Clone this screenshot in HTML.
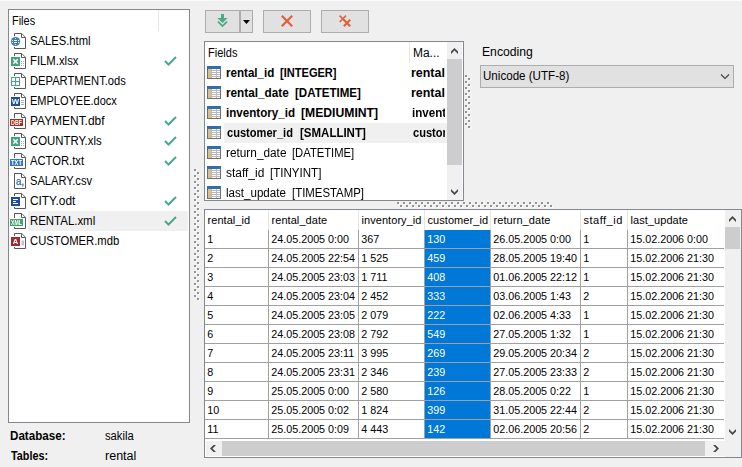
<!DOCTYPE html>
<html><head><meta charset="utf-8"><title>Import</title>
<style>
html,body{margin:0;padding:0}
body{width:742px;height:467px;background:#f0f0f0;position:relative;overflow:hidden;font-family:"Liberation Sans",sans-serif;font-size:12px;color:#000}
div,span{box-sizing:border-box}
.abs{position:absolute}
.t{position:absolute;white-space:nowrap;line-height:16px;height:16px;transform-origin:0 0}
.box{position:absolute;background:#fff;border:1px solid #828790}
.ic,.ck,.fi{position:absolute;display:block;overflow:visible}.ic{will-change:transform}
.btn{position:absolute;background:#e1e1e1;border:1px solid #adadad}
.g{position:absolute;white-space:nowrap;font-size:10.75px;line-height:14px;height:14px}
.gh{font-size:11px;letter-spacing:0.06px}
.b{font-weight:bold}
.dd,.dw{position:absolute;width:2px;height:2px;display:block}.dd{background:#939393}.dw{background:#fbfbfb}
.clip{position:absolute;overflow:hidden;height:16px}
</style></head>
<body>
<div class="abs" style="left:0;top:0;width:742px;height:1px;background:#fafafa"></div>
<div class="box" style="left:8px;top:9px;width:182px;height:414px"></div>
<div class="abs" style="left:158px;top:10px;width:1px;height:21px;background:#e5e5e5"></div>
<span class="t" style="left:11.99px;top:13px;transform:scaleX(0.9125);">Files</span>
<svg class="ic" style="left:10px;top:33px" width="17" height="16" viewBox="0 0 17 16"><path d="M4.500 0.500h7l4 4v11h-11z" fill="#fff"/><path d="M11.500 0.500H4.500V15.500H15.500V4.500H11.500V0.500" fill="none" stroke="#585858"/><path d="M11.600 0.400L15.600 4.400" fill="none" stroke="#5c5c5c" stroke-width="0.900"/><circle cx="5.5" cy="8.5" r="5.6" fill="#fff"/><circle cx="5.5" cy="8.5" r="4.6" fill="#4179bd"/><path d="M4 7.500h3M4 9.500h3" stroke="#fff" stroke-width="1"/><path d="M5 5.500h1M5 11.500h1M2 7.500h1M8 7.500h1M2 9.500h1M8 9.500h1" stroke="#dbe7f6" stroke-width="1"/></svg>
<span class="t" style="left:29.76px;top:33px;transform:scaleX(0.9365);">SALES.html</span>
<svg class="ic" style="left:10px;top:53px" width="17" height="16" viewBox="0 0 17 16"><path d="M4.500 0.500h7l4 4v11h-11z" fill="#fff"/><path d="M11.500 0.500H4.500V15.500H15.500V4.500H11.500V0.500" fill="none" stroke="#585858"/><path d="M11.600 0.400L15.600 4.400" fill="none" stroke="#5c5c5c" stroke-width="0.900"/><rect x="0" y="3" width="11" height="11" fill="#fff"/><rect x="1" y="4" width="9" height="9" fill="#41a37a"/><path d="M3.300 6.200l4.400 4.600M7.700 6.200l-4.400 4.600" stroke="#fff" stroke-width="1.500" fill="none"/><path d="M11 8.500h1M13 8.500h1M11 10.500h1M13 10.500h1M11 12.500h1M13 12.500h1" stroke="#b4b4b4" stroke-width="1"/></svg>
<span class="t" style="left:29.96px;top:53px;transform:scaleX(0.9440);">FILM.xlsx</span>
<svg class="ck" style="left:160px;top:51px" width="20" height="20" viewBox="0 0 20 20"><path d="M5 10l3.500 3.500L16 6" fill="none" stroke="#4aaa85" stroke-width="2"/></svg>
<svg class="ic" style="left:10px;top:73px" width="17" height="16" viewBox="0 0 17 16"><path d="M4.500 0.500h7l4 4v11h-11z" fill="#fff"/><path d="M11.500 0.500H4.500V15.500H15.500V4.500H11.500V0.500" fill="none" stroke="#585858"/><path d="M11.600 0.400L15.600 4.400" fill="none" stroke="#5c5c5c" stroke-width="0.900"/><rect x="0" y="3" width="11" height="11" fill="#fff"/><rect x="1.500" y="4.500" width="8" height="8" fill="#fff" stroke="#48a880"/><path d="M5.500 4.500v8M1.500 8.500h8" stroke="#48a880" fill="none"/></svg>
<span class="t" style="left:29.97px;top:73px;transform:scaleX(0.9314);">DEPARTMENT.ods</span>
<svg class="ic" style="left:10px;top:93px" width="17" height="16" viewBox="0 0 17 16"><path d="M4.500 0.500h7l4 4v11h-11z" fill="#fff"/><path d="M11.500 0.500H4.500V15.500H15.500V4.500H11.500V0.500" fill="none" stroke="#585858"/><path d="M11.600 0.400L15.600 4.400" fill="none" stroke="#5c5c5c" stroke-width="0.900"/><rect x="0" y="3" width="11" height="11" fill="#fff"/><rect x="1" y="4" width="9" height="9" fill="#1e4e9c"/><text x="5.500" y="11.300" font-size="8" font-weight="bold" text-anchor="middle" fill="#fff" font-family="Liberation Sans, sans-serif" textLength="7.400" lengthAdjust="spacingAndGlyphs">W</text><path d="M11 7.500h3M11 9.500h3M11 11.500h3" stroke="#b4b4b4" stroke-width="1"/></svg>
<span class="t" style="left:29.98px;top:93px;transform:scaleX(0.9172);">EMPLOYEE.docx</span>
<svg class="ic" style="left:10px;top:113px" width="17" height="16" viewBox="0 0 17 16"><path d="M4.500 0.500h7l4 4v11h-11z" fill="#fff"/><path d="M11.500 0.500H4.500V15.500H15.500V4.500H11.500V0.500" fill="none" stroke="#585858"/><path d="M11.600 0.400L15.600 4.400" fill="none" stroke="#5c5c5c" stroke-width="0.900"/><rect x="-1" y="5" width="15" height="9" fill="#fff"/><rect x="0" y="6" width="13" height="7" fill="#b02a18"/><text x="1.100" y="12" font-size="6.700" font-weight="bold" fill="#fff" font-family="Liberation Sans, sans-serif" textLength="10.800" lengthAdjust="spacingAndGlyphs">DBF</text></svg>
<span class="t" style="left:29.91px;top:113px;transform:scaleX(0.9946);">PAYMENT.dbf</span>
<svg class="ck" style="left:160px;top:111px" width="20" height="20" viewBox="0 0 20 20"><path d="M5 10l3.500 3.500L16 6" fill="none" stroke="#4aaa85" stroke-width="2"/></svg>
<svg class="ic" style="left:10px;top:133px" width="17" height="16" viewBox="0 0 17 16"><path d="M4.500 0.500h7l4 4v11h-11z" fill="#fff"/><path d="M11.500 0.500H4.500V15.500H15.500V4.500H11.500V0.500" fill="none" stroke="#585858"/><path d="M11.600 0.400L15.600 4.400" fill="none" stroke="#5c5c5c" stroke-width="0.900"/><rect x="0" y="3" width="11" height="11" fill="#fff"/><rect x="1" y="4" width="9" height="9" fill="#41a37a"/><path d="M3.300 6.200l4.400 4.600M7.700 6.200l-4.400 4.600" stroke="#fff" stroke-width="1.500" fill="none"/><path d="M11 8.500h1M13 8.500h1M11 10.500h1M13 10.500h1M11 12.500h1M13 12.500h1" stroke="#b4b4b4" stroke-width="1"/></svg>
<span class="t" style="left:29.75px;top:133px;transform:scaleX(0.9473);">COUNTRY.xls</span>
<svg class="ck" style="left:160px;top:131px" width="20" height="20" viewBox="0 0 20 20"><path d="M5 10l3.500 3.500L16 6" fill="none" stroke="#4aaa85" stroke-width="2"/></svg>
<svg class="ic" style="left:10px;top:153px" width="17" height="16" viewBox="0 0 17 16"><path d="M4.500 0.500h7l4 4v11h-11z" fill="#fff"/><path d="M11.500 0.500H4.500V15.500H15.500V4.500H11.500V0.500" fill="none" stroke="#585858"/><path d="M11.600 0.400L15.600 4.400" fill="none" stroke="#5c5c5c" stroke-width="0.900"/><rect x="-1" y="5" width="15" height="9" fill="#fff"/><rect x="0" y="6" width="13" height="7" fill="#3878c0"/><text x="1.100" y="12" font-size="6.700" font-weight="bold" fill="#fff" font-family="Liberation Sans, sans-serif" textLength="10.800" lengthAdjust="spacingAndGlyphs">TXT</text></svg>
<span class="t" style="left:30.20px;top:153px;transform:scaleX(0.9345);">ACTOR.txt</span>
<svg class="ck" style="left:160px;top:151px" width="20" height="20" viewBox="0 0 20 20"><path d="M5 10l3.500 3.500L16 6" fill="none" stroke="#4aaa85" stroke-width="2"/></svg>
<svg class="ic" style="left:10px;top:173px" width="17" height="16" viewBox="0 0 17 16"><path d="M4.500 0.500h7l4 4v11h-11z" fill="#fff"/><path d="M11.500 0.500H4.500V15.500H15.500V4.500H11.500V0.500" fill="none" stroke="#585858"/><path d="M11.600 0.400L15.600 4.400" fill="none" stroke="#5c5c5c" stroke-width="0.900"/><text x="6.1" y="12.2" font-size="11" fill="#2a68bb" stroke="#2a68bb" stroke-width="0.250" font-family="Liberation Sans, sans-serif" textLength="8.2" lengthAdjust="spacingAndGlyphs">a,</text></svg>
<span class="t" style="left:29.77px;top:173px;transform:scaleX(0.9273);">SALARY.csv</span>
<svg class="ic" style="left:10px;top:193px" width="17" height="16" viewBox="0 0 17 16"><path d="M4.500 0.500h7l4 4v11h-11z" fill="#fff"/><path d="M11.500 0.500H4.500V15.500H15.500V4.500H11.500V0.500" fill="none" stroke="#585858"/><path d="M11.600 0.400L15.600 4.400" fill="none" stroke="#5c5c5c" stroke-width="0.900"/><rect x="0" y="3" width="11" height="11" fill="#fff"/><rect x="1" y="4" width="9" height="9" fill="#1c4c9a"/><path d="M3 6.500h5M3 8.500h3M3 10.500h5" stroke="#fff" stroke-width="1"/></svg>
<span class="t" style="left:29.71px;top:193px;transform:scaleX(0.9889);">CITY.odt</span>
<svg class="ck" style="left:160px;top:191px" width="20" height="20" viewBox="0 0 20 20"><path d="M5 10l3.500 3.500L16 6" fill="none" stroke="#4aaa85" stroke-width="2"/></svg>
<div class="abs" style="left:28px;top:211px;width:160px;height:20px;background:#f0f0f0"></div>
<svg class="ic" style="left:10px;top:213px" width="17" height="16" viewBox="0 0 17 16"><path d="M4.500 0.500h7l4 4v11h-11z" fill="#fff"/><path d="M11.500 0.500H4.500V15.500H15.500V4.500H11.500V0.500" fill="none" stroke="#585858"/><path d="M11.600 0.400L15.600 4.400" fill="none" stroke="#5c5c5c" stroke-width="0.900"/><rect x="-1" y="5" width="15" height="9" fill="#fff"/><rect x="0" y="6" width="13" height="7" fill="#3fa374"/><text x="1.100" y="12" font-size="6.700" font-weight="bold" fill="#fff" font-family="Liberation Sans, sans-serif" textLength="10.800" lengthAdjust="spacingAndGlyphs">XML</text></svg>
<span class="t" style="left:29.95px;top:213px;transform:scaleX(0.9522);">RENTAL.xml</span>
<svg class="ck" style="left:160px;top:211px" width="20" height="20" viewBox="0 0 20 20"><path d="M5 10l3.500 3.500L16 6" fill="none" stroke="#4aaa85" stroke-width="2"/></svg>
<svg class="ic" style="left:10px;top:233px" width="17" height="16" viewBox="0 0 17 16"><path d="M4.500 0.500h7l4 4v11h-11z" fill="#fff"/><path d="M11.500 0.500H4.500V15.500H15.500V4.500H11.500V0.500" fill="none" stroke="#585858"/><path d="M11.600 0.400L15.600 4.400" fill="none" stroke="#5c5c5c" stroke-width="0.900"/><rect x="0" y="3" width="11" height="11" fill="#fff"/><rect x="1" y="4" width="9" height="9" fill="#a22a32"/><text x="5.500" y="11.300" font-size="7.500" font-weight="bold" text-anchor="middle" fill="#fff" font-family="Liberation Sans, sans-serif">A</text><path d="M11.500 7.500h2.500v5h-2.500z" fill="#c4c4c4"/></svg>
<span class="t" style="left:29.76px;top:233px;transform:scaleX(0.9383);">CUSTOMER.mdb</span>
<span class="t b" style="left:9.93px;top:428px;transform:scaleX(0.9691);">Database:</span>
<span class="t" style="left:104.57px;top:428px;transform:scaleX(0.9333);">sakila</span>
<span class="t b" style="left:10.90px;top:448px;transform:scaleX(0.9000);">Tables:</span>
<span class="t" style="left:104.66px;top:448px;transform:scaleX(1.0429);">rental</span>
<div class="btn" style="left:205px;top:10px;width:35px;height:23px"></div>
<div class="btn" style="left:240px;top:10px;width:13px;height:23px"></div>
<svg class="abs" style="left:214px;top:13px" width="17" height="16" viewBox="0 0 17 16"><path d="M7 1h3v4h3.600l-5.100 5.100L3.400 5h3.600z" fill="#4caa84"/><path d="M4 8.600l4.500 4.500L13 8.600" fill="none" stroke="#4caa84" stroke-width="1.800"/></svg>
<svg class="abs" style="left:243px;top:20px" width="7" height="4" viewBox="0 0 7 4"><path d="M0 0h7l-3.500 4z" fill="#000"/></svg>
<div class="btn" style="left:263px;top:10px;width:48px;height:23px"></div>
<svg class="abs" style="left:280px;top:14px" width="14" height="14" viewBox="0 0 14 14"><path d="M1.800 1.800l10.400 10.400M12.200 1.800l-10.400 10.400" stroke="#e0603c" stroke-width="2.200" fill="none"/></svg>
<div class="btn" style="left:321px;top:10px;width:48px;height:23px"></div>
<svg class="abs" style="left:338px;top:14px" width="14" height="14" viewBox="0 0 14 14"><path d="M1.600 1.600l6 6M8 1.600l-6.400 6.400" stroke="#e0603c" stroke-width="1.500" fill="none"/><path d="M5.800 5.800l6.400 6.400M12.200 5.800l-6.400 6.400" stroke="#e0603c" stroke-width="2.200" fill="none"/></svg>
<div class="box" style="left:204px;top:41px;width:260px;height:160px"></div>
<span class="t" style="left:207.98px;top:45px;transform:scaleX(0.9194);">Fields</span>
<div class="abs" style="left:409px;top:42px;width:1px;height:21px;background:#e5e5e5"></div>
<span class="t" style="left:412.80px;top:45px;transform:scaleX(0.9960);">Ma...</span>
<svg class="fi" style="left:207px;top:66px" width="14" height="13" viewBox="0 0 14 13" shape-rendering="crispEdges"><rect x="0" y="0" width="14" height="3" fill="#2f6db5"/><rect x="0" y="3" width="14" height="10" fill="#6e6e6e"/><rect x="1" y="3" width="12" height="9" fill="#b9b9b9"/><rect x="1" y="3" width="3" height="1" fill="#f5c35a"/><rect x="5" y="3" width="4" height="1" fill="#fff"/><rect x="10" y="3" width="3" height="1" fill="#fff"/><rect x="1" y="5" width="3" height="1" fill="#f5c35a"/><rect x="5" y="5" width="4" height="1" fill="#fff"/><rect x="10" y="5" width="3" height="1" fill="#fff"/><rect x="1" y="7" width="3" height="1" fill="#f5c35a"/><rect x="5" y="7" width="4" height="1" fill="#fff"/><rect x="10" y="7" width="3" height="1" fill="#fff"/><rect x="1" y="9" width="3" height="1" fill="#f5c35a"/><rect x="5" y="9" width="4" height="1" fill="#fff"/><rect x="10" y="9" width="3" height="1" fill="#fff"/><rect x="1" y="11" width="3" height="1" fill="#f5c35a"/><rect x="5" y="11" width="4" height="1" fill="#fff"/><rect x="10" y="11" width="3" height="1" fill="#fff"/></svg>
<span class="t b" style="left:225.63px;top:65px;transform:scaleX(0.9667);">rental_id</span>
<span class="t b" style="left:280.18px;top:65px;transform:scaleX(0.9217);">[INTEGER]</span>
<span class="t b" style="left:411.36px;top:65px;transform:scaleX(1.0355);">rental</span>
<svg class="fi" style="left:207px;top:86px" width="14" height="13" viewBox="0 0 14 13" shape-rendering="crispEdges"><rect x="0" y="0" width="14" height="3" fill="#2f6db5"/><rect x="0" y="3" width="14" height="10" fill="#6e6e6e"/><rect x="1" y="3" width="12" height="9" fill="#b9b9b9"/><rect x="1" y="3" width="3" height="1" fill="#f5c35a"/><rect x="5" y="3" width="4" height="1" fill="#fff"/><rect x="10" y="3" width="3" height="1" fill="#fff"/><rect x="1" y="5" width="3" height="1" fill="#f5c35a"/><rect x="5" y="5" width="4" height="1" fill="#fff"/><rect x="10" y="5" width="3" height="1" fill="#fff"/><rect x="1" y="7" width="3" height="1" fill="#f5c35a"/><rect x="5" y="7" width="4" height="1" fill="#fff"/><rect x="10" y="7" width="3" height="1" fill="#fff"/><rect x="1" y="9" width="3" height="1" fill="#f5c35a"/><rect x="5" y="9" width="4" height="1" fill="#fff"/><rect x="10" y="9" width="3" height="1" fill="#fff"/><rect x="1" y="11" width="3" height="1" fill="#f5c35a"/><rect x="5" y="11" width="4" height="1" fill="#fff"/><rect x="10" y="11" width="3" height="1" fill="#fff"/></svg>
<span class="t b" style="left:225.62px;top:85px;transform:scaleX(0.9794);">rental_date</span>
<span class="t b" style="left:294.94px;top:85px;transform:scaleX(0.9627);">[DATETIME]</span>
<span class="t b" style="left:411.36px;top:85px;transform:scaleX(1.0355);">rental</span>
<svg class="fi" style="left:207px;top:106px" width="14" height="13" viewBox="0 0 14 13" shape-rendering="crispEdges"><rect x="0" y="0" width="14" height="3" fill="#2f6db5"/><rect x="0" y="3" width="14" height="10" fill="#6e6e6e"/><rect x="1" y="3" width="12" height="9" fill="#b9b9b9"/><rect x="1" y="3" width="3" height="1" fill="#f5c35a"/><rect x="5" y="3" width="4" height="1" fill="#fff"/><rect x="10" y="3" width="3" height="1" fill="#fff"/><rect x="1" y="5" width="3" height="1" fill="#f5c35a"/><rect x="5" y="5" width="4" height="1" fill="#fff"/><rect x="10" y="5" width="3" height="1" fill="#fff"/><rect x="1" y="7" width="3" height="1" fill="#f5c35a"/><rect x="5" y="7" width="4" height="1" fill="#fff"/><rect x="10" y="7" width="3" height="1" fill="#fff"/><rect x="1" y="9" width="3" height="1" fill="#f5c35a"/><rect x="5" y="9" width="4" height="1" fill="#fff"/><rect x="10" y="9" width="3" height="1" fill="#fff"/><rect x="1" y="11" width="3" height="1" fill="#f5c35a"/><rect x="5" y="11" width="4" height="1" fill="#fff"/><rect x="10" y="11" width="3" height="1" fill="#fff"/></svg>
<span class="t b" style="left:225.63px;top:105px;transform:scaleX(0.9671);">inventory_id</span>
<span class="t b" style="left:301.19px;top:105px;transform:scaleX(1.0147);">[MEDIUMINT]</span>
<div class="clip" style="left:0;top:105px;width:445px"><span class="t b" style="left:411.83px;top:0px;transform:scaleX(0.9671);">inventory_id</span></div>
<div class="abs" style="left:224px;top:123px;width:223px;height:20px;background:#f0f0f0"></div>
<svg class="fi" style="left:207px;top:126px" width="14" height="13" viewBox="0 0 14 13" shape-rendering="crispEdges"><rect x="0" y="0" width="14" height="3" fill="#2f6db5"/><rect x="0" y="3" width="14" height="10" fill="#6e6e6e"/><rect x="1" y="3" width="12" height="9" fill="#b9b9b9"/><rect x="1" y="3" width="3" height="1" fill="#f5c35a"/><rect x="5" y="3" width="4" height="1" fill="#fff"/><rect x="10" y="3" width="3" height="1" fill="#fff"/><rect x="1" y="5" width="3" height="1" fill="#f5c35a"/><rect x="5" y="5" width="4" height="1" fill="#fff"/><rect x="10" y="5" width="3" height="1" fill="#fff"/><rect x="1" y="7" width="3" height="1" fill="#f5c35a"/><rect x="5" y="7" width="4" height="1" fill="#fff"/><rect x="10" y="7" width="3" height="1" fill="#fff"/><rect x="1" y="9" width="3" height="1" fill="#f5c35a"/><rect x="5" y="9" width="4" height="1" fill="#fff"/><rect x="10" y="9" width="3" height="1" fill="#fff"/><rect x="1" y="11" width="3" height="1" fill="#f5c35a"/><rect x="5" y="11" width="4" height="1" fill="#fff"/><rect x="10" y="11" width="3" height="1" fill="#fff"/></svg>
<span class="t b" style="left:226.50px;top:125px;transform:scaleX(0.9239);">customer_id</span>
<span class="t b" style="left:299.94px;top:125px;transform:scaleX(0.9582);">[SMALLINT]</span>
<div class="clip" style="left:0;top:125px;width:445px"><span class="t b" style="left:412.80px;top:0px;transform:scaleX(0.9239);">customer_id</span></div>
<svg class="fi" style="left:207px;top:146px" width="14" height="13" viewBox="0 0 14 13" shape-rendering="crispEdges"><rect x="0" y="0" width="14" height="3" fill="#2f6db5"/><rect x="0" y="3" width="14" height="10" fill="#6e6e6e"/><rect x="1" y="3" width="12" height="9" fill="#b9b9b9"/><rect x="1" y="3" width="3" height="1" fill="#f5c35a"/><rect x="5" y="3" width="4" height="1" fill="#fff"/><rect x="10" y="3" width="3" height="1" fill="#fff"/><rect x="1" y="5" width="3" height="1" fill="#f5c35a"/><rect x="5" y="5" width="4" height="1" fill="#fff"/><rect x="10" y="5" width="3" height="1" fill="#fff"/><rect x="1" y="7" width="3" height="1" fill="#f5c35a"/><rect x="5" y="7" width="4" height="1" fill="#fff"/><rect x="10" y="7" width="3" height="1" fill="#fff"/><rect x="1" y="9" width="3" height="1" fill="#f5c35a"/><rect x="5" y="9" width="4" height="1" fill="#fff"/><rect x="10" y="9" width="3" height="1" fill="#fff"/><rect x="1" y="11" width="3" height="1" fill="#f5c35a"/><rect x="5" y="11" width="4" height="1" fill="#fff"/><rect x="10" y="11" width="3" height="1" fill="#fff"/></svg>
<span class="t" style="left:225.71px;top:145px;transform:scaleX(0.9850);">return_date</span>
<span class="t" style="left:292.06px;top:145px;transform:scaleX(0.9354);">[DATETIME]</span>
<svg class="fi" style="left:207px;top:166px" width="14" height="13" viewBox="0 0 14 13" shape-rendering="crispEdges"><rect x="0" y="0" width="14" height="3" fill="#2f6db5"/><rect x="0" y="3" width="14" height="10" fill="#6e6e6e"/><rect x="1" y="3" width="12" height="9" fill="#b9b9b9"/><rect x="1" y="3" width="3" height="1" fill="#f5c35a"/><rect x="5" y="3" width="4" height="1" fill="#fff"/><rect x="10" y="3" width="3" height="1" fill="#fff"/><rect x="1" y="5" width="3" height="1" fill="#f5c35a"/><rect x="5" y="5" width="4" height="1" fill="#fff"/><rect x="10" y="5" width="3" height="1" fill="#fff"/><rect x="1" y="7" width="3" height="1" fill="#f5c35a"/><rect x="5" y="7" width="4" height="1" fill="#fff"/><rect x="10" y="7" width="3" height="1" fill="#fff"/><rect x="1" y="9" width="3" height="1" fill="#f5c35a"/><rect x="5" y="9" width="4" height="1" fill="#fff"/><rect x="10" y="9" width="3" height="1" fill="#fff"/><rect x="1" y="11" width="3" height="1" fill="#f5c35a"/><rect x="5" y="11" width="4" height="1" fill="#fff"/><rect x="10" y="11" width="3" height="1" fill="#fff"/></svg>
<span class="t" style="left:225.51px;top:165px;transform:scaleX(0.9946);">staff_id</span>
<span class="t" style="left:269.84px;top:165px;transform:scaleX(0.9635);">[TINYINT]</span>
<svg class="fi" style="left:207px;top:186px" width="14" height="13" viewBox="0 0 14 13" shape-rendering="crispEdges"><rect x="0" y="0" width="14" height="3" fill="#2f6db5"/><rect x="0" y="3" width="14" height="10" fill="#6e6e6e"/><rect x="1" y="3" width="12" height="9" fill="#b9b9b9"/><rect x="1" y="3" width="3" height="1" fill="#f5c35a"/><rect x="5" y="3" width="4" height="1" fill="#fff"/><rect x="10" y="3" width="3" height="1" fill="#fff"/><rect x="1" y="5" width="3" height="1" fill="#f5c35a"/><rect x="5" y="5" width="4" height="1" fill="#fff"/><rect x="10" y="5" width="3" height="1" fill="#fff"/><rect x="1" y="7" width="3" height="1" fill="#f5c35a"/><rect x="5" y="7" width="4" height="1" fill="#fff"/><rect x="10" y="7" width="3" height="1" fill="#fff"/><rect x="1" y="9" width="3" height="1" fill="#f5c35a"/><rect x="5" y="9" width="4" height="1" fill="#fff"/><rect x="10" y="9" width="3" height="1" fill="#fff"/><rect x="1" y="11" width="3" height="1" fill="#f5c35a"/><rect x="5" y="11" width="4" height="1" fill="#fff"/><rect x="10" y="11" width="3" height="1" fill="#fff"/></svg>
<span class="t" style="left:225.93px;top:185px;transform:scaleX(0.9656);">last_update</span>
<span class="t" style="left:292.25px;top:185px;transform:scaleX(0.9500);">[TIMESTAMP]</span>
<div class="abs" style="left:447px;top:42px;width:15px;height:158px;background:#f0f0f0"></div>
<div class="abs" style="left:447px;top:59px;width:15px;height:106px;background:#cdcdcd"></div>
<svg class="abs" style="left:451px;top:48px" width="7" height="6" viewBox="0 0 7 6"><path d="M3.500 0L7 3.500V6L3.500 2.500L0 6V3.500z" fill="#484848"/></svg>
<svg class="abs" style="left:451px;top:189px" width="7" height="6" viewBox="0 0 7 6"><path d="M3.500 6L7 2.500V0L3.500 3.500L0 0V2.500z" fill="#484848"/></svg>
<i class="dw" style="left:466px;top:76px"></i><i class="dd" style="left:465px;top:75px"></i>
<i class="dw" style="left:469px;top:79px"></i><i class="dd" style="left:468px;top:78px"></i>
<i class="dw" style="left:466px;top:82px"></i><i class="dd" style="left:465px;top:81px"></i>
<i class="dw" style="left:469px;top:85px"></i><i class="dd" style="left:468px;top:84px"></i>
<i class="dw" style="left:466px;top:88px"></i><i class="dd" style="left:465px;top:87px"></i>
<i class="dw" style="left:469px;top:91px"></i><i class="dd" style="left:468px;top:90px"></i>
<i class="dw" style="left:466px;top:94px"></i><i class="dd" style="left:465px;top:93px"></i>
<i class="dw" style="left:469px;top:97px"></i><i class="dd" style="left:468px;top:96px"></i>
<i class="dw" style="left:466px;top:100px"></i><i class="dd" style="left:465px;top:99px"></i>
<i class="dw" style="left:469px;top:103px"></i><i class="dd" style="left:468px;top:102px"></i>
<i class="dw" style="left:466px;top:106px"></i><i class="dd" style="left:465px;top:105px"></i>
<i class="dw" style="left:469px;top:109px"></i><i class="dd" style="left:468px;top:108px"></i>
<i class="dw" style="left:466px;top:112px"></i><i class="dd" style="left:465px;top:111px"></i>
<i class="dw" style="left:469px;top:115px"></i><i class="dd" style="left:468px;top:114px"></i>
<i class="dw" style="left:466px;top:118px"></i><i class="dd" style="left:465px;top:117px"></i>
<i class="dw" style="left:469px;top:121px"></i><i class="dd" style="left:468px;top:120px"></i>
<i class="dw" style="left:466px;top:124px"></i><i class="dd" style="left:465px;top:123px"></i>
<i class="dw" style="left:469px;top:127px"></i><i class="dd" style="left:468px;top:126px"></i>
<i class="dw" style="left:195px;top:170px"></i><i class="dd" style="left:194px;top:169px"></i>
<i class="dw" style="left:198px;top:173px"></i><i class="dd" style="left:197px;top:172px"></i>
<i class="dw" style="left:195px;top:176px"></i><i class="dd" style="left:194px;top:175px"></i>
<i class="dw" style="left:198px;top:179px"></i><i class="dd" style="left:197px;top:178px"></i>
<i class="dw" style="left:195px;top:182px"></i><i class="dd" style="left:194px;top:181px"></i>
<i class="dw" style="left:198px;top:185px"></i><i class="dd" style="left:197px;top:184px"></i>
<i class="dw" style="left:195px;top:188px"></i><i class="dd" style="left:194px;top:187px"></i>
<i class="dw" style="left:198px;top:191px"></i><i class="dd" style="left:197px;top:190px"></i>
<i class="dw" style="left:195px;top:194px"></i><i class="dd" style="left:194px;top:193px"></i>
<i class="dw" style="left:198px;top:197px"></i><i class="dd" style="left:197px;top:196px"></i>
<i class="dw" style="left:195px;top:200px"></i><i class="dd" style="left:194px;top:199px"></i>
<i class="dw" style="left:198px;top:203px"></i><i class="dd" style="left:197px;top:202px"></i>
<i class="dw" style="left:195px;top:206px"></i><i class="dd" style="left:194px;top:205px"></i>
<i class="dw" style="left:198px;top:209px"></i><i class="dd" style="left:197px;top:208px"></i>
<i class="dw" style="left:195px;top:212px"></i><i class="dd" style="left:194px;top:211px"></i>
<i class="dw" style="left:198px;top:215px"></i><i class="dd" style="left:197px;top:214px"></i>
<i class="dw" style="left:195px;top:218px"></i><i class="dd" style="left:194px;top:217px"></i>
<i class="dw" style="left:198px;top:221px"></i><i class="dd" style="left:197px;top:220px"></i>
<i class="dw" style="left:195px;top:224px"></i><i class="dd" style="left:194px;top:223px"></i>
<i class="dw" style="left:198px;top:227px"></i><i class="dd" style="left:197px;top:226px"></i>
<i class="dw" style="left:195px;top:230px"></i><i class="dd" style="left:194px;top:229px"></i>
<i class="dw" style="left:198px;top:233px"></i><i class="dd" style="left:197px;top:232px"></i>
<i class="dw" style="left:195px;top:236px"></i><i class="dd" style="left:194px;top:235px"></i>
<i class="dw" style="left:198px;top:239px"></i><i class="dd" style="left:197px;top:238px"></i>
<i class="dw" style="left:195px;top:242px"></i><i class="dd" style="left:194px;top:241px"></i>
<i class="dw" style="left:198px;top:245px"></i><i class="dd" style="left:197px;top:244px"></i>
<i class="dw" style="left:195px;top:248px"></i><i class="dd" style="left:194px;top:247px"></i>
<i class="dw" style="left:198px;top:251px"></i><i class="dd" style="left:197px;top:250px"></i>
<i class="dw" style="left:195px;top:254px"></i><i class="dd" style="left:194px;top:253px"></i>
<i class="dw" style="left:198px;top:257px"></i><i class="dd" style="left:197px;top:256px"></i>
<i class="dw" style="left:195px;top:260px"></i><i class="dd" style="left:194px;top:259px"></i>
<i class="dw" style="left:198px;top:263px"></i><i class="dd" style="left:197px;top:262px"></i>
<i class="dw" style="left:195px;top:266px"></i><i class="dd" style="left:194px;top:265px"></i>
<i class="dw" style="left:198px;top:269px"></i><i class="dd" style="left:197px;top:268px"></i>
<i class="dw" style="left:195px;top:272px"></i><i class="dd" style="left:194px;top:271px"></i>
<i class="dw" style="left:198px;top:275px"></i><i class="dd" style="left:197px;top:274px"></i>
<i class="dw" style="left:195px;top:278px"></i><i class="dd" style="left:194px;top:277px"></i>
<i class="dw" style="left:198px;top:281px"></i><i class="dd" style="left:197px;top:280px"></i>
<i class="dw" style="left:195px;top:284px"></i><i class="dd" style="left:194px;top:283px"></i>
<i class="dw" style="left:198px;top:287px"></i><i class="dd" style="left:197px;top:286px"></i>
<i class="dw" style="left:195px;top:290px"></i><i class="dd" style="left:194px;top:289px"></i>
<i class="dw" style="left:198px;top:293px"></i><i class="dd" style="left:197px;top:292px"></i>
<i class="dw" style="left:195px;top:296px"></i><i class="dd" style="left:194px;top:295px"></i>
<i class="dw" style="left:198px;top:299px"></i><i class="dd" style="left:197px;top:298px"></i>
<i class="dw" style="left:398px;top:203px"></i><i class="dd" style="left:397px;top:202px"></i>
<i class="dw" style="left:401px;top:206px"></i><i class="dd" style="left:400px;top:205px"></i>
<i class="dw" style="left:404px;top:203px"></i><i class="dd" style="left:403px;top:202px"></i>
<i class="dw" style="left:407px;top:206px"></i><i class="dd" style="left:406px;top:205px"></i>
<i class="dw" style="left:410px;top:203px"></i><i class="dd" style="left:409px;top:202px"></i>
<i class="dw" style="left:413px;top:206px"></i><i class="dd" style="left:412px;top:205px"></i>
<i class="dw" style="left:416px;top:203px"></i><i class="dd" style="left:415px;top:202px"></i>
<i class="dw" style="left:419px;top:206px"></i><i class="dd" style="left:418px;top:205px"></i>
<i class="dw" style="left:422px;top:203px"></i><i class="dd" style="left:421px;top:202px"></i>
<i class="dw" style="left:425px;top:206px"></i><i class="dd" style="left:424px;top:205px"></i>
<i class="dw" style="left:428px;top:203px"></i><i class="dd" style="left:427px;top:202px"></i>
<i class="dw" style="left:431px;top:206px"></i><i class="dd" style="left:430px;top:205px"></i>
<i class="dw" style="left:434px;top:203px"></i><i class="dd" style="left:433px;top:202px"></i>
<i class="dw" style="left:437px;top:206px"></i><i class="dd" style="left:436px;top:205px"></i>
<i class="dw" style="left:440px;top:203px"></i><i class="dd" style="left:439px;top:202px"></i>
<i class="dw" style="left:443px;top:206px"></i><i class="dd" style="left:442px;top:205px"></i>
<i class="dw" style="left:446px;top:203px"></i><i class="dd" style="left:445px;top:202px"></i>
<i class="dw" style="left:449px;top:206px"></i><i class="dd" style="left:448px;top:205px"></i>
<i class="dw" style="left:452px;top:203px"></i><i class="dd" style="left:451px;top:202px"></i>
<i class="dw" style="left:455px;top:206px"></i><i class="dd" style="left:454px;top:205px"></i>
<i class="dw" style="left:458px;top:203px"></i><i class="dd" style="left:457px;top:202px"></i>
<i class="dw" style="left:461px;top:206px"></i><i class="dd" style="left:460px;top:205px"></i>
<i class="dw" style="left:464px;top:203px"></i><i class="dd" style="left:463px;top:202px"></i>
<i class="dw" style="left:467px;top:206px"></i><i class="dd" style="left:466px;top:205px"></i>
<i class="dw" style="left:470px;top:203px"></i><i class="dd" style="left:469px;top:202px"></i>
<i class="dw" style="left:473px;top:206px"></i><i class="dd" style="left:472px;top:205px"></i>
<i class="dw" style="left:476px;top:203px"></i><i class="dd" style="left:475px;top:202px"></i>
<i class="dw" style="left:479px;top:206px"></i><i class="dd" style="left:478px;top:205px"></i>
<i class="dw" style="left:482px;top:203px"></i><i class="dd" style="left:481px;top:202px"></i>
<i class="dw" style="left:485px;top:206px"></i><i class="dd" style="left:484px;top:205px"></i>
<i class="dw" style="left:488px;top:203px"></i><i class="dd" style="left:487px;top:202px"></i>
<i class="dw" style="left:491px;top:206px"></i><i class="dd" style="left:490px;top:205px"></i>
<i class="dw" style="left:494px;top:203px"></i><i class="dd" style="left:493px;top:202px"></i>
<i class="dw" style="left:497px;top:206px"></i><i class="dd" style="left:496px;top:205px"></i>
<i class="dw" style="left:500px;top:203px"></i><i class="dd" style="left:499px;top:202px"></i>
<i class="dw" style="left:503px;top:206px"></i><i class="dd" style="left:502px;top:205px"></i>
<i class="dw" style="left:506px;top:203px"></i><i class="dd" style="left:505px;top:202px"></i>
<i class="dw" style="left:509px;top:206px"></i><i class="dd" style="left:508px;top:205px"></i>
<i class="dw" style="left:512px;top:203px"></i><i class="dd" style="left:511px;top:202px"></i>
<i class="dw" style="left:515px;top:206px"></i><i class="dd" style="left:514px;top:205px"></i>
<i class="dw" style="left:518px;top:203px"></i><i class="dd" style="left:517px;top:202px"></i>
<i class="dw" style="left:521px;top:206px"></i><i class="dd" style="left:520px;top:205px"></i>
<i class="dw" style="left:524px;top:203px"></i><i class="dd" style="left:523px;top:202px"></i>
<i class="dw" style="left:527px;top:206px"></i><i class="dd" style="left:526px;top:205px"></i>
<i class="dw" style="left:530px;top:203px"></i><i class="dd" style="left:529px;top:202px"></i>
<i class="dw" style="left:533px;top:206px"></i><i class="dd" style="left:532px;top:205px"></i>
<i class="dw" style="left:536px;top:203px"></i><i class="dd" style="left:535px;top:202px"></i>
<i class="dw" style="left:539px;top:206px"></i><i class="dd" style="left:538px;top:205px"></i>
<i class="dw" style="left:542px;top:203px"></i><i class="dd" style="left:541px;top:202px"></i>
<i class="dw" style="left:545px;top:206px"></i><i class="dd" style="left:544px;top:205px"></i>
<i class="dw" style="left:548px;top:203px"></i><i class="dd" style="left:547px;top:202px"></i>
<i class="dw" style="left:551px;top:206px"></i><i class="dd" style="left:550px;top:205px"></i>
<span class="t" style="left:481.89px;top:44px;transform:scaleX(1.0146);">Encoding</span>
<div class="btn" style="left:480px;top:65px;width:254px;height:23px"></div>
<span class="t" style="left:482.63px;top:68px;transform:scaleX(0.9659);">Unicode (UTF-8)</span>
<svg class="abs" style="left:720px;top:73px" width="10" height="7" viewBox="0 0 10 7"><path d="M1 1.500l4 4 4-4" fill="none" stroke="#404040" stroke-width="1.100"/></svg>
<div class="box" style="left:204px;top:209px;width:538px;height:249px"></div>
<span class="g gh" style="left:207.5px;top:213px">rental_id</span>
<span class="g gh" style="left:271.5px;top:213px">rental_date</span>
<span class="g gh" style="left:361.5px;top:213px">inventory_id</span>
<span class="g gh" style="left:427.5px;top:213px">customer_id</span>
<span class="g gh" style="left:493.5px;top:213px">return_date</span>
<span class="g gh" style="left:583.5px;top:213px;letter-spacing:0.5px">staff_id</span>
<span class="g gh" style="left:630.5px;top:213px">last_update</span>
<div class="abs" style="left:268px;top:210px;width:1px;height:20px;background:#e5e5e5"></div>
<div class="abs" style="left:268px;top:230px;width:1px;height:209px;background:#a0a0a0"></div>
<div class="abs" style="left:358px;top:210px;width:1px;height:20px;background:#e5e5e5"></div>
<div class="abs" style="left:358px;top:230px;width:1px;height:209px;background:#a0a0a0"></div>
<div class="abs" style="left:424px;top:210px;width:1px;height:20px;background:#e5e5e5"></div>
<div class="abs" style="left:424px;top:230px;width:1px;height:209px;background:#a0a0a0"></div>
<div class="abs" style="left:490px;top:210px;width:1px;height:20px;background:#e5e5e5"></div>
<div class="abs" style="left:490px;top:230px;width:1px;height:209px;background:#a0a0a0"></div>
<div class="abs" style="left:580px;top:210px;width:1px;height:20px;background:#e5e5e5"></div>
<div class="abs" style="left:580px;top:230px;width:1px;height:209px;background:#a0a0a0"></div>
<div class="abs" style="left:627px;top:210px;width:1px;height:20px;background:#e5e5e5"></div>
<div class="abs" style="left:627px;top:230px;width:1px;height:209px;background:#a0a0a0"></div>
<div class="abs" style="left:425px;top:230px;width:65px;height:18px;background:#0078d7"></div>
<div class="abs" style="left:205px;top:248px;width:519px;height:1px;background:#a0a0a0"></div>
<span class="g" style="left:207.3px;top:232px;">1</span>
<span class="g" style="left:271.3px;top:232px;">24.05.2005 0:00</span>
<span class="g" style="left:361.3px;top:232px;">367</span>
<span class="g" style="left:427.3px;top:232px;color:#fff">130</span>
<span class="g" style="left:493.3px;top:232px;">26.05.2005 0:00</span>
<span class="g" style="left:583.3px;top:232px;">1</span>
<span class="g" style="left:630.3px;top:232px;">15.02.2006 0:00</span>
<div class="abs" style="left:425px;top:249px;width:65px;height:18px;background:#0078d7"></div>
<div class="abs" style="left:205px;top:267px;width:519px;height:1px;background:#a0a0a0"></div>
<span class="g" style="left:207.3px;top:251px;">2</span>
<span class="g" style="left:271.3px;top:251px;">24.05.2005 22:54</span>
<span class="g" style="left:361.3px;top:251px;">1 525</span>
<span class="g" style="left:427.3px;top:251px;color:#fff">459</span>
<span class="g" style="left:493.3px;top:251px;">28.05.2005 19:40</span>
<span class="g" style="left:583.3px;top:251px;">1</span>
<span class="g" style="left:630.3px;top:251px;">15.02.2006 21:30</span>
<div class="abs" style="left:425px;top:268px;width:65px;height:18px;background:#0078d7"></div>
<div class="abs" style="left:205px;top:286px;width:519px;height:1px;background:#a0a0a0"></div>
<span class="g" style="left:207.3px;top:270px;">3</span>
<span class="g" style="left:271.3px;top:270px;">24.05.2005 23:03</span>
<span class="g" style="left:361.3px;top:270px;">1 711</span>
<span class="g" style="left:427.3px;top:270px;color:#fff">408</span>
<span class="g" style="left:493.3px;top:270px;">01.06.2005 22:12</span>
<span class="g" style="left:583.3px;top:270px;">1</span>
<span class="g" style="left:630.3px;top:270px;">15.02.2006 21:30</span>
<div class="abs" style="left:425px;top:287px;width:65px;height:18px;background:#0078d7"></div>
<div class="abs" style="left:205px;top:305px;width:519px;height:1px;background:#a0a0a0"></div>
<span class="g" style="left:207.3px;top:289px;">4</span>
<span class="g" style="left:271.3px;top:289px;">24.05.2005 23:04</span>
<span class="g" style="left:361.3px;top:289px;">2 452</span>
<span class="g" style="left:427.3px;top:289px;color:#fff">333</span>
<span class="g" style="left:493.3px;top:289px;">03.06.2005 1:43</span>
<span class="g" style="left:583.3px;top:289px;">2</span>
<span class="g" style="left:630.3px;top:289px;">15.02.2006 21:30</span>
<div class="abs" style="left:425px;top:306px;width:65px;height:18px;background:#0078d7"></div>
<div class="abs" style="left:205px;top:324px;width:519px;height:1px;background:#a0a0a0"></div>
<span class="g" style="left:207.3px;top:308px;">5</span>
<span class="g" style="left:271.3px;top:308px;">24.05.2005 23:05</span>
<span class="g" style="left:361.3px;top:308px;">2 079</span>
<span class="g" style="left:427.3px;top:308px;color:#fff">222</span>
<span class="g" style="left:493.3px;top:308px;">02.06.2005 4:33</span>
<span class="g" style="left:583.3px;top:308px;">1</span>
<span class="g" style="left:630.3px;top:308px;">15.02.2006 21:30</span>
<div class="abs" style="left:425px;top:325px;width:65px;height:18px;background:#0078d7"></div>
<div class="abs" style="left:205px;top:343px;width:519px;height:1px;background:#a0a0a0"></div>
<span class="g" style="left:207.3px;top:327px;">6</span>
<span class="g" style="left:271.3px;top:327px;">24.05.2005 23:08</span>
<span class="g" style="left:361.3px;top:327px;">2 792</span>
<span class="g" style="left:427.3px;top:327px;color:#fff">549</span>
<span class="g" style="left:493.3px;top:327px;">27.05.2005 1:32</span>
<span class="g" style="left:583.3px;top:327px;">1</span>
<span class="g" style="left:630.3px;top:327px;">15.02.2006 21:30</span>
<div class="abs" style="left:425px;top:344px;width:65px;height:18px;background:#0078d7"></div>
<div class="abs" style="left:205px;top:362px;width:519px;height:1px;background:#a0a0a0"></div>
<span class="g" style="left:207.3px;top:346px;">7</span>
<span class="g" style="left:271.3px;top:346px;">24.05.2005 23:11</span>
<span class="g" style="left:361.3px;top:346px;">3 995</span>
<span class="g" style="left:427.3px;top:346px;color:#fff">269</span>
<span class="g" style="left:493.3px;top:346px;">29.05.2005 20:34</span>
<span class="g" style="left:583.3px;top:346px;">2</span>
<span class="g" style="left:630.3px;top:346px;">15.02.2006 21:30</span>
<div class="abs" style="left:425px;top:363px;width:65px;height:18px;background:#0078d7"></div>
<div class="abs" style="left:205px;top:381px;width:519px;height:1px;background:#a0a0a0"></div>
<span class="g" style="left:207.3px;top:365px;">8</span>
<span class="g" style="left:271.3px;top:365px;">24.05.2005 23:31</span>
<span class="g" style="left:361.3px;top:365px;">2 346</span>
<span class="g" style="left:427.3px;top:365px;color:#fff">239</span>
<span class="g" style="left:493.3px;top:365px;">27.05.2005 23:33</span>
<span class="g" style="left:583.3px;top:365px;">2</span>
<span class="g" style="left:630.3px;top:365px;">15.02.2006 21:30</span>
<div class="abs" style="left:425px;top:382px;width:65px;height:18px;background:#0078d7"></div>
<div class="abs" style="left:205px;top:400px;width:519px;height:1px;background:#a0a0a0"></div>
<span class="g" style="left:207.3px;top:384px;">9</span>
<span class="g" style="left:271.3px;top:384px;">25.05.2005 0:00</span>
<span class="g" style="left:361.3px;top:384px;">2 580</span>
<span class="g" style="left:427.3px;top:384px;color:#fff">126</span>
<span class="g" style="left:493.3px;top:384px;">28.05.2005 0:22</span>
<span class="g" style="left:583.3px;top:384px;">1</span>
<span class="g" style="left:630.3px;top:384px;">15.02.2006 21:30</span>
<div class="abs" style="left:425px;top:401px;width:65px;height:18px;background:#0078d7"></div>
<div class="abs" style="left:205px;top:419px;width:519px;height:1px;background:#a0a0a0"></div>
<span class="g" style="left:207.3px;top:403px;">10</span>
<span class="g" style="left:271.3px;top:403px;">25.05.2005 0:02</span>
<span class="g" style="left:361.3px;top:403px;">1 824</span>
<span class="g" style="left:427.3px;top:403px;color:#fff">399</span>
<span class="g" style="left:493.3px;top:403px;">31.05.2005 22:44</span>
<span class="g" style="left:583.3px;top:403px;">2</span>
<span class="g" style="left:630.3px;top:403px;">15.02.2006 21:30</span>
<div class="abs" style="left:425px;top:420px;width:65px;height:18px;background:#0078d7"></div>
<div class="abs" style="left:205px;top:438px;width:519px;height:1px;background:#a0a0a0"></div>
<span class="g" style="left:207.3px;top:422px;">11</span>
<span class="g" style="left:271.3px;top:422px;">25.05.2005 0:09</span>
<span class="g" style="left:361.3px;top:422px;">4 443</span>
<span class="g" style="left:427.3px;top:422px;color:#fff">142</span>
<span class="g" style="left:493.3px;top:422px;">02.06.2005 20:56</span>
<span class="g" style="left:583.3px;top:422px;">2</span>
<span class="g" style="left:630.3px;top:422px;">15.02.2006 21:30</span>
<div class="abs" style="left:725px;top:210px;width:16px;height:247px;background:#f0f0f0"></div>
<div class="abs" style="left:725px;top:227px;width:15px;height:22px;background:#cdcdcd"></div>
<svg class="abs" style="left:729px;top:216px" width="7" height="6" viewBox="0 0 7 6"><path d="M3.500 0L7 3.500V6L3.500 2.500L0 6V3.500z" fill="#484848"/></svg>
<svg class="abs" style="left:729px;top:429px" width="7" height="6" viewBox="0 0 7 6"><path d="M3.500 6L7 2.500V0L3.500 3.500L0 0V2.500z" fill="#484848"/></svg>
<div class="abs" style="left:206px;top:441px;width:535px;height:15px;background:#f0f0f0"></div>
<div class="abs" style="left:222px;top:441px;width:483px;height:15px;background:#cdcdcd"></div>
<svg class="abs" style="left:210px;top:445px" width="6" height="7" viewBox="0 0 6 7"><path d="M0 3.500L3.500 7H6L2.500 3.500L6 0H3.500z" fill="#484848"/></svg>
<svg class="abs" style="left:713px;top:445px" width="6" height="7" viewBox="0 0 6 7"><path d="M6 3.500L2.500 7H0L3.500 3.500L0 0H2.500z" fill="#484848"/></svg>
</body></html>
